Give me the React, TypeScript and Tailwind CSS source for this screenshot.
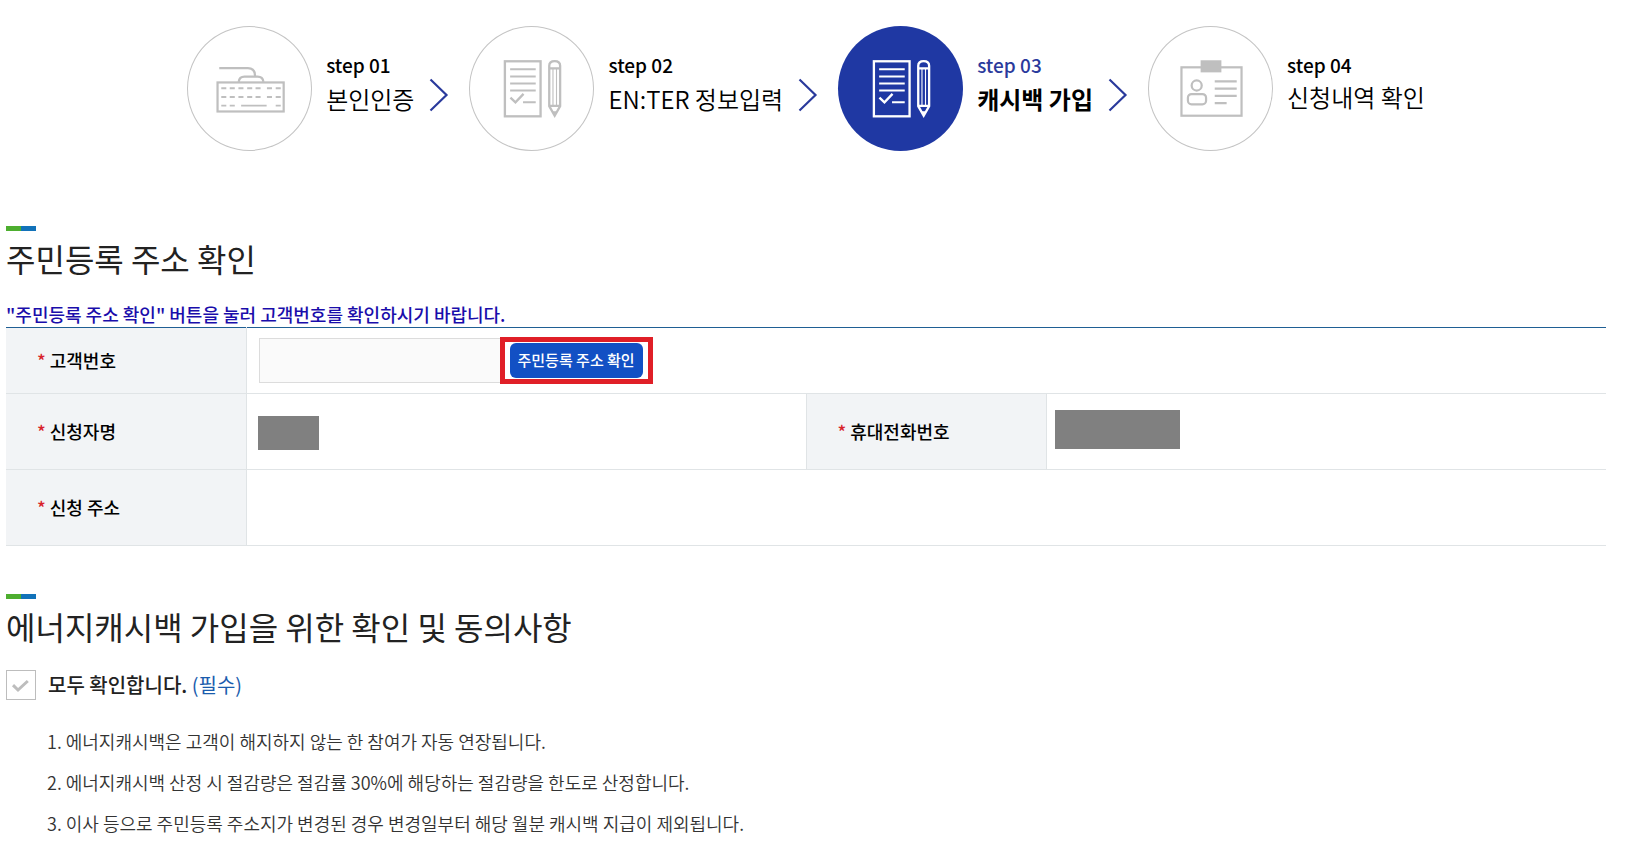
import { Fragment, type ReactNode } from "react";

function KeyboardIcon() {
  return (
    <svg viewBox="0 0 124 124" className="size-full" fill="none" stroke="#bfbfbf" strokeWidth="2.2" aria-hidden="true">
      <rect x="30.3" y="56" width="65.6" height="28.8" />
      <path d="M32 41.7H60.5Q67.5 41.7 67.5 49.5" />
      <path d="M51.3 55.5Q51.8 50.3 57 50.3H70Q75.3 50.3 75.8 55.5" />
      <path
        strokeWidth="1.9"
        d="M34 61.8h5M42.4 61.8h5M51 61.8h5M59.7 61.8h5M68 61.8h5M79.3 61.8h5M88 61.8h5M34 70.4h5M42.4 70.4h5M51 70.4h5M59.7 70.4h5M68 70.4h5M79.3 70.4h5M88 70.4h5M34 79h5M42.4 79h5M53.7 79H79M88 79h5"
      />
    </svg>
  );
}

function DocumentIcon({ color }: { color: string }) {
  return (
    <svg viewBox="0 0 124 124" className="size-full" fill="none" stroke={color} strokeWidth="2.3" aria-hidden="true">
      <rect x="35.6" y="35" width="35.4" height="54.6" />
      <path strokeWidth="2" d="M40.8 43H66.2M40.8 50H66.2M40.8 57H66.2M40.8 64H66.2M53.6 75.6H66.2" />
      <path d="M41.1 71L46.1 75.8L54.1 67.3" />
      <path d="M79.6 42V39.5Q79.6 34.8 85 34.8Q90.4 34.8 90.4 39.5V42V79.5L85 89L79.6 79.5Z" />
      <path d="M79.6 42H90.4M79.6 79.3H90.4" />
      <path strokeWidth="1.1" d="M83.3 42V79M86.8 42V79" />
      <path fill={color} stroke="none" d="M82.7 84.5H87.3L85 89Z" />
    </svg>
  );
}

function IdCardIcon() {
  return (
    <svg viewBox="0 0 124 124" className="size-full" fill="none" stroke="#bfbfbf" strokeWidth="2.2" aria-hidden="true">
      <rect x="33.2" y="41" width="59.6" height="48" />
      <rect x="52.2" y="34" width="20.6" height="12" fill="#bfbfbf" stroke="none" />
      <circle cx="48.3" cy="59" r="5" />
      <rect x="39.6" y="67.5" width="18" height="10.2" rx="3.6" />
      <path d="M66.2 55H88M66.2 62.2H88M66.2 69.4H88M66.2 76.6H78" />
    </svg>
  );
}

function Chevron() {
  return (
    <svg width="20" height="34" viewBox="0 0 20 34" fill="none" stroke="#2a3a9c" strokeWidth="2.2" className="mt-3 shrink-0" aria-hidden="true">
      <path d="M1.5 1.5L17.5 17L1.5 32.5" />
    </svg>
  );
}

type Step = { no: string; name: string; icon: ReactNode; active?: boolean; tight?: boolean };

const steps: Step[] = [
  { no: "step 01", name: "본인인증", icon: <KeyboardIcon /> },
  { no: "step 02", name: "EN:TER 정보입력", icon: <DocumentIcon color="#bfbfbf" /> },
  { no: "step 03", name: "캐시백 가입", icon: <DocumentIcon color="#ffffff" />, active: true },
  { no: "step 04", name: "신청내역 확인", icon: <IdCardIcon />, tight: true },
];

const notes = [
  "에너지캐시백은 고객이 해지하지 않는 한 참여가 자동 연장됩니다.",
  "에너지캐시백 산정 시 절감량은 절감률 30%에 해당하는 절감량을 한도로 산정합니다.",
  "이사 등으로 주민등록 주소지가 변경된 경우 변경일부터 해당 월분 캐시백 지급이 제외됩니다.",
];

function SectionTitle({ children }: { children: ReactNode }) {
  return (
    <div>
      <div className="flex h-[5px] w-[30px]">
        <span className="flex-1 bg-[#4dae2f]" />
        <span className="flex-1 bg-[#1272b9]" />
      </div>
      <h2 className="mt-[3px] text-[32px] leading-[48px] text-[#222]">{children}</h2>
    </div>
  );
}

function Label({ children, htmlFor }: { children: ReactNode; htmlFor?: string }) {
  return (
    <label htmlFor={htmlFor} className="flex items-center gap-1">
      <span className="text-[#d8232a]">*</span>
      {children}
    </label>
  );
}

const th = "border-r border-[#e0e4e6] bg-[#f2f4f6] pl-[31px] text-left font-medium";

export default function App() {
  return (
    <main className="py-[26px] pr-[35px] pl-1.5 font-['Noto_Sans_CJK_KR','Noto_Sans_KR',sans-serif] text-black">
      <ol className="flex items-center justify-center">
        {steps.map((s, i) => (
          <Fragment key={s.no}>
            <li className="flex items-center gap-3.5">
              <div
                className={
                  s.active
                    ? "size-[125px] shrink-0 rounded-full bg-[#1f38a3]"
                    : "size-[125px] shrink-0 rounded-full bg-white ring-1 ring-[#c4c4c4] ring-inset"
                }
              >
                {s.icon}
              </div>
              <div className="pb-2.5">
                <p className={s.active ? "text-[19px] leading-7 font-medium text-[#2a3a9c]" : "text-[19px] leading-7 font-medium"}>{s.no}</p>
                <p
                  className={
                    s.active
                      ? "pt-0.5 text-[24px] leading-9 font-bold"
                      : s.tight
                        ? "pb-0.5 text-[24px] leading-9 font-[350]"
                        : "pt-0.5 text-[24px] leading-9 font-[350]"
                  }
                >
                  {s.name}
                </p>
              </div>
            </li>
            {i < steps.length - 1 && (
              <li aria-hidden="true" className="pr-5 pl-[15px]">
                <Chevron />
              </li>
            )}
          </Fragment>
        ))}
      </ol>

      <section className="mt-[75px]">
        <SectionTitle>주민등록 주소 확인</SectionTitle>
        <p className="mt-[19px] text-[18px] leading-[26px] font-medium text-[#1a0dab]">
          "주민등록 주소 확인" 버튼을 눌러 고객번호를 확인하시기 바랍니다.
        </p>
        <table className="w-full table-fixed border-collapse border-t border-[#1f5f94] text-[18px]">
          <colgroup>
            <col className="w-[15%]" />
            <col className="w-[35%]" />
            <col className="w-[15%]" />
            <col className="w-[35%]" />
          </colgroup>
          <tbody>
            <tr className="h-[66px] border-b border-b-[#e0e4e6]">
              <th scope="row" className={th}>
                <Label htmlFor="customer-no">고객번호</Label>
              </th>
              <td colSpan={3} className="pl-3">
                <div className="flex items-center">
                  <input id="customer-no" type="text" readOnly className="h-[45px] w-[241px] border border-r-0 border-[#dcdcdc] bg-[#fafafa] px-3" />
                  <span className="border-[5px] border-[#e01f27] px-[5px] py-px">
                    <button type="button" className="block h-[35px] rounded-md bg-[#1250c4] px-2 text-[15px] font-medium text-white">
                      주민등록 주소 확인
                    </button>
                  </span>
                </div>
              </td>
            </tr>
            <tr className="h-[76px] border-b border-b-[#e0e4e6]">
              <th scope="row" className={th}>
                <Label>신청자명</Label>
              </th>
              <td className="pl-[11px]">
                <div className="mt-0.5 h-[34px] w-[61px] bg-[#808080]" />
              </td>
              <th scope="row" className={`border-l ${th}`}>
                <Label>휴대전화번호</Label>
              </th>
              <td className="pl-2">
                <div className="mb-1 h-[39px] w-[125px] bg-[#808080]" />
              </td>
            </tr>
            <tr className="h-[76px] border-b border-b-[#e0e4e6]">
              <th scope="row" className={th}>
                <Label>신청 주소</Label>
              </th>
              <td colSpan={3} />
            </tr>
          </tbody>
        </table>
      </section>

      <section className="mt-12">
        <SectionTitle>에너지캐시백 가입을 위한 확인 및 동의사항</SectionTitle>
        <label className="mt-5 flex items-center gap-3">
          <span className="grid size-[30px] place-items-center">
            <input type="checkbox" className="col-start-1 row-start-1 size-[30px] appearance-none border border-[#bdbdbd] bg-white" />
            <svg viewBox="0 0 30 30" className="pointer-events-none col-start-1 row-start-1 size-[30px]" fill="none" stroke="#bdbdbd" strokeWidth="3" aria-hidden="true">
              <path d="M7 15.2L12 20L21.8 11" />
            </svg>
          </span>
          <span className="text-[20px] leading-[30px] font-medium text-[#222]">
            모두 확인합니다. <span className="font-normal text-[#1a5cad]">(필수)</span>
          </span>
        </label>
        <ol className="mt-[21px] pl-[41px] text-[18px] leading-[41px] font-[350] text-[#333]">
          {notes.map((n, i) => (
            <li key={n}>
              {i + 1}. {n}
            </li>
          ))}
        </ol>
      </section>
    </main>
  );
}
